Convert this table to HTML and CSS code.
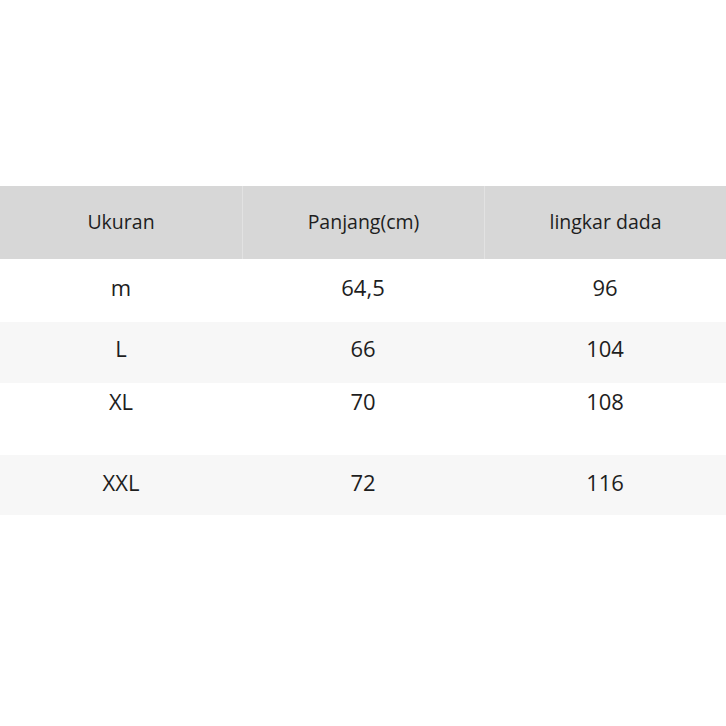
FILE: index.html
```html
<!DOCTYPE html>
<html lang="id">
<head>
<meta charset="utf-8">
<link rel="stylesheet" href="styles.css">
</head>
<body>
<div class="table">
  <div class="row head">
    <div class="cell">Ukuran</div>
    <div class="cell">Panjang(cm)</div>
    <div class="cell">lingkar dada</div>
  </div>
  <div class="row r1">
    <div class="cell">m</div>
    <div class="cell">64,5</div>
    <div class="cell">96</div>
  </div>
  <div class="row r2 shade">
    <div class="cell">L</div>
    <div class="cell">66</div>
    <div class="cell">104</div>
  </div>
  <div class="row r3">
    <div class="cell">XL</div>
    <div class="cell">70</div>
    <div class="cell">108</div>
  </div>
  <div class="row r4 shade">
    <div class="cell">XXL</div>
    <div class="cell">72</div>
    <div class="cell">116</div>
  </div>
</div>
</body>
</html>
```
FILE: styles.css
```css
html, body {
  margin: 0;
  padding: 0;
  background: #ffffff;
}
body {
  font-family: "Open Sans", "Noto Sans", sans-serif;
  color: #1e1e1e;
}
.table {
  margin-top: 186px;
  width: 726px;
}
.row {
  display: grid;
  grid-template-columns: 242px 242px 242px;
  box-sizing: border-box;
}
.cell {
  text-align: center;
  line-height: 30px;
  font-size: 22px;
}
.head {
  background: #d7d7d7;
  height: 73px;
  align-items: stretch;
}
.head .cell {
  font-size: 19.5px;
  display: flex;
  align-items: center;
  justify-content: center;
  padding-bottom: 2px;
}
.head .cell + .cell {
  border-left: 1px solid #e2e2e2;
}
.shade {
  background: #f7f7f7;
}
.r1 { height: 63px; padding-top: 13px; }
.r2 { height: 61px; padding-top: 11px; }
.r3 { height: 72px; padding-top: 3px; }
.r4 { height: 60px; padding-top: 12px; }
```
